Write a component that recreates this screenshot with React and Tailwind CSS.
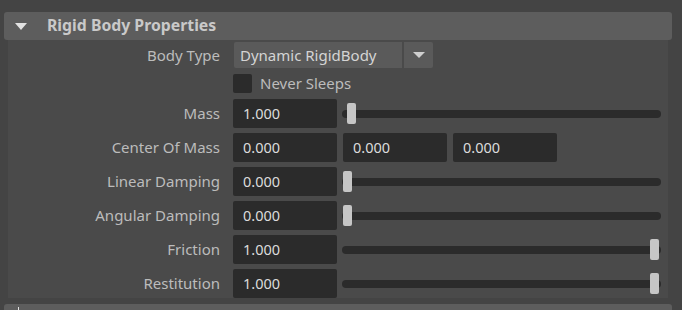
import React from 'react';

const font = { fontFamily: '"Noto Sans", "Open Sans", sans-serif' };

const Field = ({ value, w = 'w-[104px]' }) => (
  <div className={`${w} h-[29px] bg-[#2b2b2b] rounded-[2px] flex items-center pl-[10px] text-[14.5px] text-[#dcdcdc]`}>
    {value}
  </div>
);

const Slider = ({ pos }) => (
  <div className="relative ml-[5px] w-[319px] h-[8px] rounded-full bg-[#2b2b2b]">
    <div
      className="absolute top-[-7px] w-[9px] h-[21px] rounded-[2px] bg-[#c6c6c6]"
      style={{ left: pos }}
    />
  </div>
);

const Row = ({ label, children, h = 'h-[29px]' }) => (
  <div className={`flex items-center ${h}`}>
    <div className="w-[212px] text-right text-[15px] text-[#bcbcbc] whitespace-nowrap">{label}</div>
    <div className="ml-[13px] flex items-center">{children}</div>
  </div>
);

const App = () => {
  return (
    <div className="w-[682px] h-[310px] bg-[#444444] overflow-hidden pt-[12px] pl-[4px]" style={font}>
      <div className="w-[668px] h-[28px] rounded-[3px] bg-[#5d5d5d] flex items-center">
        <div className="ml-[11px] w-0 h-0 border-l-[6.5px] border-r-[6.5px] border-t-[7px] border-l-transparent border-r-transparent border-t-[#e2e2e2]" />
        <span className="ml-[20px] text-[15.8px] font-bold text-[#c9c9c9]">Rigid Body Properties</span>
      </div>

      <div className="ml-[4px] w-[660px] h-[258px] bg-[#4a4a4a] pt-[2px] flex flex-col">
        <Row label="Body Type" h="h-[26px]">
          <div className="flex h-[26px] ml-[1px]">
            <div className="w-[168px] bg-[#5a5a5a] rounded-l-[2px] flex items-center pl-[6px] text-[15px] text-[#d4d4d4]">
              Dynamic RigidBody
            </div>
            <div className="w-[29px] ml-[2px] bg-[#5a5a5a] rounded-r-[2px] flex items-center justify-center">
              <div className="w-0 h-0 border-l-[6px] border-r-[6px] border-t-[6px] border-l-transparent border-r-transparent border-t-[#cfcfcf]" />
            </div>
          </div>
        </Row>

        <div className="flex items-center h-[19px] mt-[6px] ml-[225px]">
          <div className="w-[19px] h-[19px] bg-[#2b2b2b] rounded-[2px]" />
          <span className="ml-[8px] text-[15px] text-[#bcbcbc]">Never Sleeps</span>
        </div>

        <div className="mt-[6px] flex flex-col gap-[5px]">
          <Row label="Mass">
            <Field value="1.000" />
            <Slider pos={5} />
          </Row>
          <Row label="Center Of Mass">
            <Field value="0.000" />
            <div className="ml-[6px]"><Field value="0.000" /></div>
            <div className="ml-[6px]"><Field value="0.000" /></div>
          </Row>
          <Row label="Linear Damping">
            <Field value="0.000" />
            <Slider pos={1} />
          </Row>
          <Row label="Angular Damping">
            <Field value="0.000" />
            <Slider pos={1} />
          </Row>
          <Row label="Friction">
            <Field value="1.000" />
            <Slider pos={308} />
          </Row>
          <Row label="Restitution">
            <Field value="1.000" />
            <Slider pos={308} />
          </Row>
        </div>
      </div>

      <div className="mt-[6px] w-[668px] h-[28px] rounded-[3px] bg-[#5d5d5d] relative">
        <div className="absolute left-[14px] top-[3px] w-[1px] h-[4px] bg-[#e2e2e2]" />
      </div>
    </div>
  );
};

export default App;
